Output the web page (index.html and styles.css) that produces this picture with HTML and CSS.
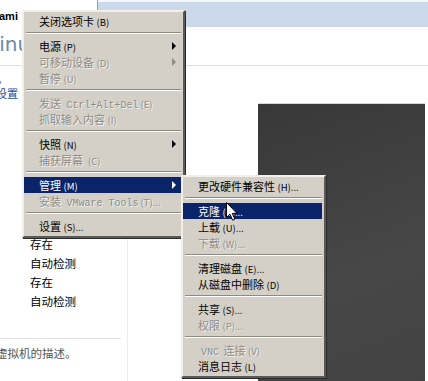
FILE: index.html
```html
<!DOCTYPE html>
<html lang="zh-CN">
<head>
  <meta charset="UTF-8">
  <title>虚拟机 - 管理菜单</title>
  <link rel="stylesheet" href="styles.css">
</head>
<body>
  <div class="tabs">
    <div class="tab"><span>ami</span></div>
  </div>
  <div class="title"><span>Linux</span></div>

  <div class="page">
    <div class="side">
      <div class="links">
        <a class="link cut1">开启此虚拟机</a>
        <a class="link cut2">编辑虚拟机设置</a>
      </div>
      <div class="lower">
        <div class="props">
          <div>存在</div>
          <div>自动检测</div>
          <div>存在</div>
          <div>自动检测</div>
        </div>
        <div class="desc">键入对该虚拟机的描述。</div>
      </div>
    </div>
    <div class="main">
      <div class="screen"></div>
    </div>
  </div>

  <!-- 右键菜单 -->
  <div class="menu main-menu">
    <div class="item">关闭选项卡 <span class="key">(B)</span></div>
    <div class="sep"></div>
    <div class="item has-sub">电源 <span class="key">(P)</span></div>
    <div class="item has-sub off">可移动设备 <span class="key">(D)</span></div>
    <div class="item off">暂停 <span class="key">(U)</span></div>
    <div class="sep"></div>
    <div class="item off">发送 <span class="mono">Ctrl+Alt+Del</span><span class="key">(E)</span></div>
    <div class="item off">抓取输入内容 <span class="key">(I)</span></div>
    <div class="sep"></div>
    <div class="item has-sub">快照 <span class="key">(N)</span></div>
    <div class="item off">捕获屏幕 &nbsp;<span class="key">(C)</span></div>
    <div class="sep"></div>
    <div class="item has-sub active">管理 <span class="key">(M)</span></div>
    <div class="item off">安装 <span class="mono">VMware Tools</span><span class="key">(T)...</span></div>
    <div class="sep"></div>
    <div class="item">设置 <span class="key">(S)...</span></div>
  </div>

  <div class="menu sub-menu">
    <div class="item">更改硬件兼容性 <span class="key">(H)...</span></div>
    <div class="sep"></div>
    <div class="item active">克隆 <span class="key">(C)...</span></div>
    <div class="item">上载 <span class="key">(U)...</span></div>
    <div class="item off">下载 <span class="key">(W)...</span></div>
    <div class="sep"></div>
    <div class="item">清理磁盘 <span class="key">(E)...</span></div>
    <div class="item">从磁盘中删除 <span class="key">(D)</span></div>
    <div class="sep"></div>
    <div class="item">共享 <span class="key">(S)...</span></div>
    <div class="item off">权限 <span class="key">(P)...</span></div>
    <div class="sep"></div>
    <div class="item off"><span class="mono">VNC</span> 连接 <span class="key">(V)</span></div>
    <div class="item">消息日志 <span class="key">(L)</span></div>
  </div>

  <svg class="cursor" width="12" height="19" viewBox="0 0 12 19">
    <path d="M0.5 0.5 L0.5 15.5 L4 12.2 L6.6 18.2 L8.8 17.2 L6.3 11.4 L11 11.4 Z" fill="#fff" stroke="#000" stroke-width="1"/>
  </svg>
</body>
</html>
```

FILE: styles.css
```css
body {
  margin: 0;
  width: 428px;
  height: 381px;
  overflow: hidden;
  background: #fff;
  font-family: "Noto Sans CJK SC", "Liberation Sans", sans-serif;
  font-size: 11px;
  color: #000;
  position: relative;
}

.tabs {
  height: 27px;
  background: #cbd9ea;
  border-top: 2px solid #f4f6f9;
  box-sizing: border-box;
  display: flex;
}

.tab {
  width: 97px;
  background: #fff;
  border-right: 1px solid #9aa3ad;
  display: flex;
  align-items: center;
  margin-top: -2px;
}

.tab span {
  font-family: "Liberation Sans", sans-serif;
  font-weight: bold;
  font-size: 11px;
  margin-left: -1px;
  margin-top: 5px;
}

.title {
  height: 38px;
  border-bottom: 1px solid #dedede;
  display: flex;
  align-items: center;
  overflow: hidden;
}

.title span {
  font-family: "DejaVu Sans", sans-serif;
  font-size: 20px;
  color: #6a86b0;
  margin-left: -12px;
  margin-top: -4px;
}

.page {
  display: flex;
  height: 315px;
}

.side {
  width: 128px;
  display: flex;
  flex-direction: column;
  overflow: hidden;
}

.links {
  padding-top: 5px;
  display: flex;
  flex-direction: column;
}

.link {
  color: #1f4e9e;
  line-height: 15px;
  white-space: nowrap;
}

.cut1 { margin-left: -65px; }
.cut2 { margin-left: -59px; }

.lower {
  margin-top: 134px;
  flex: 1;
  border-right: 1px solid #ececec;
  display: flex;
  flex-direction: column;
}

.props {
  padding-left: 30px;
  line-height: 19px;
  font-size: 11.5px;
}

.desc {
  margin-top: 27px;
  margin-right: 6px;
  border-top: 1px solid #e2e2e2;
  padding-top: 6px;
  color: #555;
  font-size: 11.5px;
  white-space: nowrap;
  margin-left: -50px;
}

.main {
  flex: 1;
  display: flex;
}

.screen {
  flex: 1;
  margin: 37px 3px 0 130px;
  background: linear-gradient(160deg, #383838, #474747 60%, #434343);
  border-top: 1px solid #d9d9d9;
}

/* 菜单 */
.menu {
  position: absolute;
  background: #d4d0c8;
  border: 2px solid;
  border-color: #f1efe9 #5c5a56 #5c5a56 #f1efe9;
  box-shadow: 1px 1px 0 #2b2b2b;
  padding: 1px 2px 2px 0;
  box-sizing: border-box;
}

.main-menu {
  left: 22px;
  top: 10px;
  width: 163px;
}

.sub-menu {
  left: 181px;
  top: 175px;
  width: 145px;
}

.item {
  height: 16px;
  line-height: 16px;
  padding-left: 15px;
  white-space: nowrap;
  position: relative;
}

.key {
  font-size: 9.5px;
}

.mono {
  font-family: "Liberation Mono", monospace;
  font-size: 10px;
  margin: 0 2px 0 3px;
}

.off {
  color: #8e8c87;
  text-shadow: 1px 1px 0 #f3f2ee;
}

.active {
  background: #0a246a;
  color: #fff;
}

.has-sub::after {
  content: '';
  position: absolute;
  right: 5px;
  top: 4px;
  border-left: 4px solid #000;
  border-top: 4px solid transparent;
  border-bottom: 4px solid transparent;
}

.has-sub.off::after {
  border-left-color: #8e8c87;
}

.has-sub.active::after {
  border-left-color: #fff;
}

.sep {
  height: 9px;
  position: relative;
}

.sep::after {
  content: '';
  position: absolute;
  left: 2px;
  right: 0;
  top: 3px;
  border-top: 1px solid #8d8a84;
  border-bottom: 1px solid #fff;
}

.cursor {
  position: absolute;
  left: 226px;
  top: 202px;
}
```
